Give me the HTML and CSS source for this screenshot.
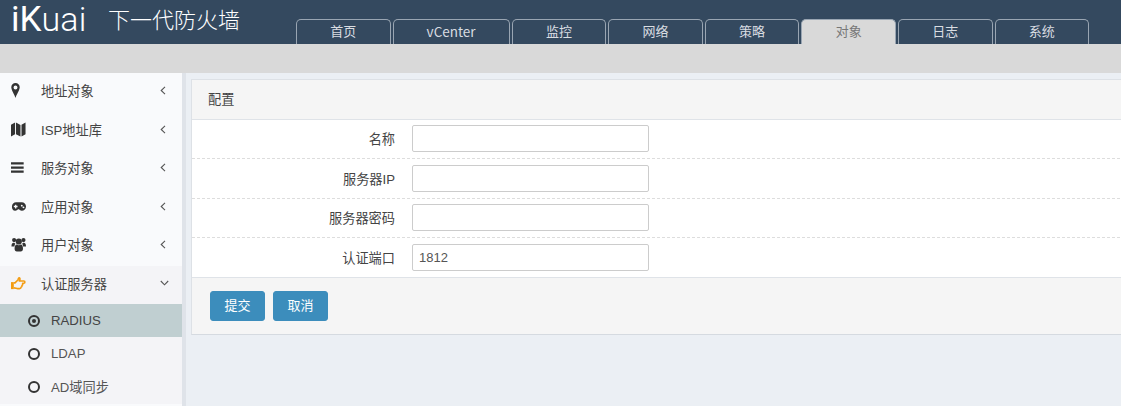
FILE: index.html
```html
<!DOCTYPE html>
<html lang="zh-CN">
<head>
<meta charset="utf-8">
<title>iKuai 下一代防火墙</title>
<link rel="stylesheet" href="styles.css">
</head>
<body>
<header class="topbar">
  <div class="logo">iK<span class="logo-rest">uai</span></div>
  <div class="title">下一代防火墙</div>
  <nav class="tabs">
    <a class="tab">首页</a>
    <a class="tab tab-wide">vCenter</a>
    <a class="tab">监控</a>
    <a class="tab">网络</a>
    <a class="tab">策略</a>
    <a class="tab active">对象</a>
    <a class="tab">日志</a>
    <a class="tab">系统</a>
  </nav>
</header>
<div class="subbar"></div>
<div class="main">
  <aside class="sidebar">
    <div class="menu-item">
      <svg class="icon" viewBox="0 0 16 16"><path fill-rule="evenodd" d="M4.800 0C2.300 0 .3 2 .3 4.600.3 7.600 3.600 12 4.800 16c1.200-4 4.500-8.400 4.500-11.400C9.300 2 7.300 0 4.800 0zm0 2.600a2.100 2.100 0 1 1 0 4.200 2.100 2.100 0 0 1 0-4.200z"/></svg>
      <span class="menu-text">地址对象</span>
      <svg class="arrow" viewBox="0 0 6 9"><path d="M5 .8 1.200 4.500 5 8.200"/></svg>
    </div>
    <div class="menu-item">
      <svg class="icon" viewBox="0 0 16 16"><path d="M0 3 4.300.6V13L0 15.400zM5.300.6l4.800 2.500V15.500L5.300 13zM11.200 3 15.500.5V13l-4.300 2.500z"/></svg>
      <span class="menu-text">ISP地址库</span>
      <svg class="arrow" viewBox="0 0 6 9"><path d="M5 .8 1.200 4.500 5 8.200"/></svg>
    </div>
    <div class="menu-item">
      <svg class="icon" viewBox="0 0 16 16"><path d="M0 2.500h13.500v2.300H0zM0 6.900h13.500v2.300H0zM0 11.300h13.500v2.300H0z"/></svg>
      <span class="menu-text">服务对象</span>
      <svg class="arrow" viewBox="0 0 6 9"><path d="M5 .8 1.200 4.500 5 8.200"/></svg>
    </div>
    <div class="menu-item">
      <svg class="icon" viewBox="0 0 16 16"><path fill-rule="evenodd" d="M5.500 3.500h6c2.500 0 4.500 2 4.500 4.500s-2 4.500-4.500 4.500c-1.300 0-2.300-.6-3-1.500h-1c-.7.900-1.700 1.500-3 1.500C2 12.500 1 10.500 1 8s2-4.500 4.500-4.500zM4.300 6v1.300H3v1.400h1.300V10h1.400V8.700H7V7.300H5.700V6zm7.200 .1a1 1 0 1 0 0 2 1 1 0 0 0 0-2zm1.800 1.800a1 1 0 1 0 0 2 1 1 0 0 0 0-2z"/></svg>
      <span class="menu-text">应用对象</span>
      <svg class="arrow" viewBox="0 0 6 9"><path d="M5 .8 1.200 4.500 5 8.200"/></svg>
    </div>
    <div class="menu-item">
      <svg class="icon" viewBox="0 0 16 16"><circle cx="3.300" cy="3.300" r="2.200"/><circle cx="13.300" cy="3.300" r="2.200"/><circle cx="8.300" cy="4.800" r="3.300"/><path d="M.5 10c0-2.500.8-3.800 2.200-3.800.6 0 1.200.4 1.900.6-.6.900-.9 2-.9 3.200H.8zM16 10c0-2.500-.8-3.800-2.200-3.800-.6 0-1.200.4-1.900.6.600.9.900 2 .9 3.200h3zM3.800 12.500C3.800 10 4.800 8 6 8c.6.500 1.400.8 2.300.8s1.700-.3 2.300-.8c1.200 0 2.200 2 2.200 4.500 0 1.600-.9 3-2.500 3H6.300C4.700 15.500 3.800 14.100 3.800 12.500z"/></svg>
      <span class="menu-text">用户对象</span>
      <svg class="arrow" viewBox="0 0 6 9"><path d="M5 .8 1.200 4.500 5 8.200"/></svg>
    </div>
    <div class="menu-item menu-open">
      <svg class="icon icon-orange" viewBox="0 0 16 16"><path fill="currentColor" d="M0 6.500h3v7.500H0z"/><path fill="none" stroke="currentColor" stroke-width="1.700" stroke-linejoin="round" d="M3 7.300h1.300l3-3c.4-.6.400-2.300 1.300-2.300.9 0 1.300 1 .7 2.500l-.4.800h4.800c1.500 0 1.500 2.400 0 2.400h-1.300c.4 1.200 0 2-.7 2.400.2 1.100-.2 1.800-1 2 0 1-.7 1.400-1.600 1.400H7c-1 0-2.400-.8-4-.8"/></svg>
      <span class="menu-text">认证服务器</span>
      <svg class="arrow arrow-down" viewBox="0 0 9 6"><path d="M.8 1 4.500 4.800 8.200 1"/></svg>
    </div>
    <div class="submenu">
      <div class="sub-item selected">
        <span class="radio"><span class="radio-dot"></span></span>
        <span>RADIUS</span>
      </div>
      <div class="sub-item">
        <span class="radio"></span>
        <span>LDAP</span>
      </div>
      <div class="sub-item">
        <span class="radio"></span>
        <span>AD域同步</span>
      </div>
    </div>
  </aside>
  <main class="content">
    <section class="panel">
      <div class="panel-head">配置</div>
      <div class="panel-body">
        <div class="form-row">
          <label class="form-label">名称</label>
          <input class="form-input" type="text">
        </div>
        <div class="form-row">
          <label class="form-label">服务器IP</label>
          <input class="form-input" type="text">
        </div>
        <div class="form-row">
          <label class="form-label">服务器密码</label>
          <input class="form-input" type="text">
        </div>
        <div class="form-row">
          <label class="form-label">认证端口</label>
          <input class="form-input" type="text" value="1812">
        </div>
      </div>
      <div class="panel-foot">
        <button class="btn">提交</button>
        <button class="btn">取消</button>
      </div>
    </section>
  </main>
</div>
</body>
</html>
```
FILE: styles.css
```css
* { box-sizing: border-box; }
html, body { margin: 0; height: 100%; overflow: hidden; }
body {
  width: 1121px;
  height: 406px;
  font-family: "Liberation Sans", "Noto Sans CJK SC", sans-serif;
  font-size: 13.200px;
  color: #444;
  background: #ebeff4;
  display: flex;
  flex-direction: column;
}
.topbar {
  height: 44px;
  flex: none;
  background: #34495f;
  display: flex;
  padding-left: 11px;
}
.logo {
  font-family: "Roboto", sans-serif;
  font-size: 35px;
  font-weight: 400;
  line-height: 34px;
  padding-top: 2px;
  color: #fff;
  width: 97px;
}
.logo-rest { font-size: 34px; font-weight: 300; letter-spacing: 0.2px; }
.title {
  font-family: "Noto Sans CJK SC", sans-serif;
  font-size: 22px;
  font-weight: 300;
  line-height: 36px;
  color: #fff;
  width: 188px;
}
.tabs {
  display: flex;
  gap: 2px;
  align-items: flex-end;
  height: 44px;
}
.tab {
  width: 94.600px;
  height: 25px;
  border: 1px solid #99a5b2;
  border-bottom: 0;
  border-radius: 5px 5px 0 0;
  color: #d9dde2;
  text-align: center;
  font-family: "Noto Sans CJK SC", sans-serif;
  font-size: 13px;
  line-height: 22px;
}
.tab-wide { width: 117px; font-size: 13.500px; }
.tab.active { background: #d9d9d9; color: #777; }
.subbar { height: 29px; flex: none; background: #d9d9d9; }
.main { flex: 1; display: flex; min-height: 0; }
.sidebar {
  width: 186px;
  flex: none;
  background: #f9fafc;
  border-right: 4px solid #dfe3e9;
}
.menu-item {
  height: 38.500px;
  display: flex;
  align-items: center;
  padding: 0 0 3px 11px;
}
.icon { width: 15px; height: 15px; fill: #333; flex: none; }
.icon-orange { color: #f39c12; }
.menu-text { margin-left: 15px; width: 119px; color: #444; }
.arrow { width: 6px; height: 9px; fill: none; stroke: #555; stroke-width: 1.100; }
.arrow-down { width: 9px; height: 6px; }
.menu-open { background: #f4f4f7; }
.submenu { background: #f4f4f7; height: 100px; }
.sub-item {
  height: 33px;
  display: flex;
  align-items: center;
  padding-left: 28px;
  gap: 11px;
  color: #555;
}
.sub-item.selected { background: #c0cfd1; color: #444; }
.radio {
  width: 12px;
  height: 12px;
  border: 2px solid #333;
  border-radius: 50%;
  display: flex;
  align-items: center;
  justify-content: center;
}
.radio-dot { width: 4px; height: 4px; border-radius: 50%; background: #333; }
.content { flex: 1; padding: 6px 0 0 5px; min-width: 0; }
.panel {
  width: 940px;
  height: 256px;
  border: 1px solid #dde1e6;
  border-bottom-color: #d5dae0;
  background: #fff;
}
.panel-head {
  height: 40px;
  background: #f5f5f5;
  border-bottom: 1px solid #dfe3e8;
  padding-left: 16px;
  line-height: 40px;
}
.form-row {
  height: 39.250px;
  display: flex;
  align-items: center;
  border-bottom: 1px dashed #ddd;
}
.form-row:first-child { padding-bottom: 1px; }
.form-row:last-child { border-bottom: 0; }
.form-label { width: 203px; text-align: right; }
.form-input {
  margin-left: 17px;
  width: 237px;
  height: 27px;
  border: 1px solid #ccc;
  border-radius: 2px;
  padding: 0 6px;
  font: 13px "Liberation Sans", sans-serif;
  color: #555;
}
.panel-foot {
  height: 57px;
  background: #f5f5f5;
  border-top: 1px solid #dfe3e8;
  padding: 13px 0 0 18px;
  display: flex;
  gap: 8px;
  align-items: flex-start;
}
.btn {
  width: 55px;
  height: 30px;
  border: 1px solid #3c8dbc;
  border-radius: 3px;
  background: #3c8dbc;
  color: #fff;
  font: 13px "Noto Sans CJK SC", sans-serif;
  padding: 0 0 3px;
}
```
